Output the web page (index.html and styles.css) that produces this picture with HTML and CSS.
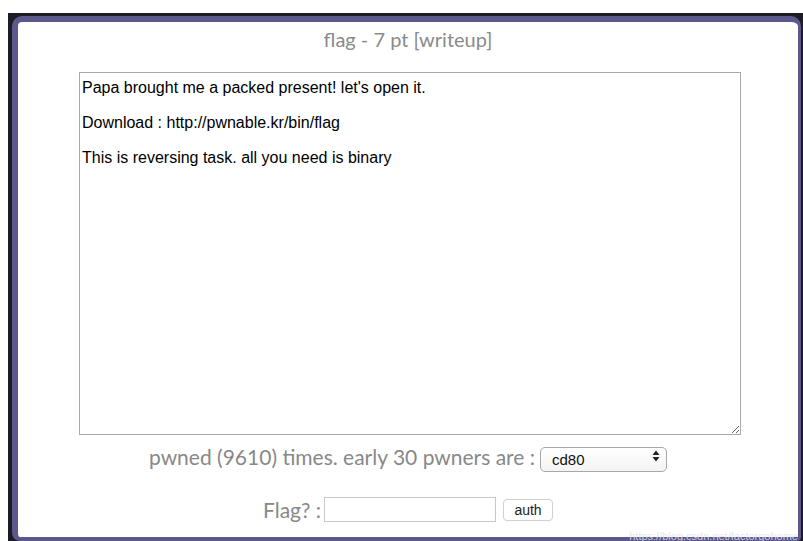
FILE: index.html
```html
<!DOCTYPE html>
<html lang="en">
<head>
<meta charset="utf-8">
<title>flag - 7 pt</title>
<link rel="stylesheet" href="styles.css">
</head>
<body>
<div class="stage">
  <div class="panel">
    <h1 class="title">flag - 7 pt [writeup]</h1>
    <textarea class="desc" readonly>Papa brought me a packed present! let's open it.

Download : http://pwnable.kr/bin/flag

This is reversing task. all you need is binary</textarea>
    <div class="pwned">
      <span>pwned (9610) times. early 30 pwners are :</span>
      <div class="picker">
        <select class="pwners">
          <option>cd80</option>
        </select>
        <svg class="picker-arrows" width="8" height="12" viewBox="0 0 8 12"><path d="M4 0.5 L7.5 5 H0.5 Z M4 11.5 L7.5 7 H0.5 Z" fill="#222"/></svg>
      </div>
    </div>
    <form class="auth-row" onsubmit="return false">
      <label class="auth-label" for="flag">Flag? :</label>
      <input id="flag" class="flag-input" type="text">
      <button class="auth-btn" type="submit">auth</button>
    </form>
    <div class="mark">https://blog.csdn.net/factorgohome</div>
  </div>
</div>
</body>
</html>
```

FILE: styles.css
```css
html, body {
  margin: 0;
  padding: 0;
  background: #ffffff;
}

.stage {
  margin: 13px 0 0 8px;
  height: 528px;
  padding: 3px 2px 0 4px;
  box-sizing: border-box;
  background: #1d1b24;
  overflow: hidden;
}

.panel {
  position: relative;
  box-sizing: border-box;
  height: 525px;
  background: #ffffff;
  border-style: solid;
  border-color: #5a588d;
  border-width: 6px 3px 4px 6px;
  border-radius: 10px 10px 4px 8px;
  font-family: Lato, "Open Sans", sans-serif;
  color: #888888;
  text-align: center;
}

.title {
  margin: 0;
  padding-top: 5px;
  height: 50px;
  box-sizing: border-box;
  font-size: 20px;
  font-weight: 400;
  line-height: 24px;
  color: #8a8a8a;
}

.desc {
  display: block;
  margin: 0 0 0 61px;
  width: 662px;
  height: 363px;
  box-sizing: border-box;
  padding: 6px 2px 2px 2px;
  border: 1px solid #a9a9a9;
  font-family: "Liberation Sans", Arial, sans-serif;
  font-size: 16px;
  line-height: 17.5px;
  color: #000000;
  text-align: left;
  resize: both;
  outline: none;
}

.pwned {
  display: flex;
  justify-content: center;
  align-items: center;
  gap: 5px;
  margin-top: 9px;
  font-size: 21px;
  line-height: 25px;
}

.picker {
  position: relative;
  width: 127px;
  height: 25px;
}

.pwners {
  appearance: none;
  -webkit-appearance: none;
  width: 100%;
  height: 100%;
  box-sizing: border-box;
  margin: 0;
  padding: 0 0 0 11px;
  border: 1px solid #a8a8a8;
  border-radius: 5px;
  background: linear-gradient(#ffffff, #f4f4f4);
  font-family: "Liberation Sans", Arial, sans-serif;
  font-size: 15px;
  color: #111111;
  outline: none;
}

.picker-arrows {
  position: absolute;
  right: 7px;
  top: 6px;
  pointer-events: none;
}

.auth-row {
  display: flex;
  justify-content: center;
  align-items: center;
  margin: 28px 0 0 0;
  height: 25px;
}

.auth-label {
  font-size: 21px;
  margin-right: 3px;
}

.flag-input {
  width: 172px;
  height: 25px;
  box-sizing: border-box;
  margin: 0 7px 0 0;
  padding: 0 3px;
  border: 1px solid #c8c8c8;
  border-radius: 0;
  font-family: "Liberation Sans", Arial, sans-serif;
  font-size: 13px;
  outline: none;
}

.auth-btn {
  width: 50px;
  height: 22px;
  box-sizing: border-box;
  padding: 0;
  border: 1px solid #d0d0d0;
  border-radius: 4px;
  background: #ffffff;
  font-family: "Liberation Sans", Arial, sans-serif;
  font-size: 14px;
  color: #222222;
}

.mark {
  position: absolute;
  right: 0;
  bottom: -5px;
  font-family: "Liberation Sans", Arial, sans-serif;
  font-size: 11px;
  line-height: 12px;
  color: rgba(226, 226, 236, 0.85);
  white-space: nowrap;
}
```
